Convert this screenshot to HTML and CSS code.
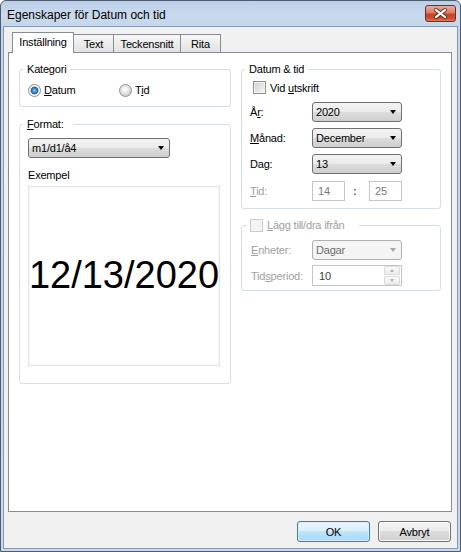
FILE: index.html
```html
<!DOCTYPE html>
<html lang="sv">
<head>
<meta charset="utf-8">
<title>Egenskaper för Datum och tid</title>
<link rel="stylesheet" href="styles.css">
</head>
<body>
<div class="window">
  <div class="titlebar">
    <span class="title">Egenskaper för Datum och tid</span>
    <div class="close">
      <svg width="31" height="17" viewBox="0 0 31 17">
        <path d="M11 5 L20 12 M20 5 L11 12" stroke="#5b2418" stroke-width="4.2" stroke-linecap="round" opacity="0.7" fill="none"/>
        <path d="M11 5 L20 12 M20 5 L11 12" stroke="#ffffff" stroke-width="2.2" stroke-linecap="round" fill="none"/>
      </svg>
    </div>
  </div>
  <div class="client">
    <div class="tabs">
      <div class="tab active w-inst">Inställning</div>
      <div class="tab w-text">Text</div>
      <div class="tab w-teck">Teckensnitt</div>
      <div class="tab w-rita">Rita</div>
    </div>
    <div class="panel">
      <div class="col col-left">
        <fieldset class="group g-kategori">
          <legend class="lg-kategori">Kategori</legend>
          <div class="radios">
            <div class="radio r-first"><span class="rbox checked"></span><span class="rtext"><u>D</u>atum</span></div>
            <div class="radio"><span class="rbox"></span><span class="rtext">T<u>i</u>d</span></div>
          </div>
        </fieldset>
        <fieldset class="group g-format">
          <legend class="lg-format"><u>F</u>ormat:</legend>
          <div class="fbody">
            <div class="combo c-format"><span>m1/d1/å4</span><span class="arrow"></span></div>
            <div class="caption">Exempel</div>
            <div class="example">12/13/2020</div>
          </div>
        </fieldset>
      </div>
      <div class="col col-right">
        <fieldset class="group g-datum">
          <legend class="lg-datum">Datum &amp; tid</legend>
          <div class="dbody">
            <div class="crow"><span class="cbox"></span><span class="ctext">Vid <u>u</u>tskrift</span></div>
            <div class="frow first">
              <span class="flabel">Å<u>r</u>:</span>
              <div class="combo c-field"><span>2020</span><span class="arrow"></span></div>
            </div>
            <div class="frow">
              <span class="flabel"><u>M</u>ånad:</span>
              <div class="combo c-field"><span>December</span><span class="arrow"></span></div>
            </div>
            <div class="frow">
              <span class="flabel">Da<u>g</u>:</span>
              <div class="combo c-field"><span>13</span><span class="arrow"></span></div>
            </div>
            <div class="frow tidrow">
              <span class="flabel disabled"><u>T</u>id:</span>
              <div class="edit small">14</div>
              <span class="colon">:</span>
              <div class="edit small">25</div>
            </div>
          </div>
        </fieldset>
        <fieldset class="group g-lagg">
          <legend class="lg-lagg"><span class="cbox dis"></span><span class="ltext"><u>L</u>ägg till/dra ifrån</span></legend>
          <div class="lbody">
            <div class="frow lrow">
              <span class="flabel l2 disabled"><u>E</u>nheter:</span>
              <div class="combo c-field dis"><span>Dagar</span><span class="arrow"></span></div>
            </div>
            <div class="frow lrow second">
              <span class="flabel l2 disabled">Tid<u>s</u>period:</span>
              <div class="edit spinedit"><span>10</span>
                <div class="spin">
                  <div class="sbtn"><span class="sup"></span></div>
                  <div class="sbtn"><span class="sdown"></span></div>
                </div>
              </div>
            </div>
          </div>
        </fieldset>
      </div>
    </div>
    <div class="buttons">
      <div class="btn default">OK</div>
      <div class="btn">Avbryt</div>
    </div>
  </div>
</div>
</body>
</html>
```

FILE: styles.css
```css
* { box-sizing: border-box; }
html, body { margin: 0; padding: 0; }
body {
  width: 461px;
  height: 552px;
  overflow: hidden;
  background: #ffffff;
  font-family: "Liberation Sans", Arial, sans-serif;
  font-size: 11px;
  color: #000;
}
u { text-decoration: underline; text-underline-offset: 1px; }

.window {
  width: 461px;
  height: 552px;
  border: 1px solid #4d5c70;
  border-radius: 6px 6px 0 0;
  background: linear-gradient(#bccfe8, #c9d9ee 14px, #c5d6eb 26px, #c9d9ec);
  padding: 0 2px 2px 2px;
  display: flex;
  flex-direction: column;
}

.titlebar {
  height: 25px;
  display: flex;
  align-items: flex-start;
  padding: 0 2px 0 4px;
  flex-shrink: 0;
}
.title {
  font-size: 12px;
  line-height: 14px;
  margin-top: 7px;
  color: #000;
}
.close {
  margin-left: auto;
  margin-top: 4px;
  width: 31px;
  height: 17px;
  border: 1px solid #6e2f24;
  border-radius: 3px;
  background: linear-gradient(#e9ad9d, #dc7a64 45%, #c9442a 55%, #c84a2f 80%, #d9805f);
  display: flex;
  overflow: hidden;
}
.close svg { display: block; margin: -1px; }

.client {
  flex: 1;
  border: 1px solid #8799b1;
  background: #f0f0f0;
  padding: 5px 5px 0 4px;
  display: flex;
  flex-direction: column;
}

/* tabs */
.tabs {
  height: 20px;
  display: flex;
  align-items: flex-end;
  padding-left: 4px;
}
.tab {
  height: 18px;
  border: 1px solid #898c95;
  border-bottom: none;
  background: linear-gradient(#f7f7f7, #ececec 50%, #e2e2e2);
  margin-left: -1px;
  text-align: center;
  line-height: 13px;
  padding-top: 3px;
  letter-spacing: -0.2px;
}
.tab.active {
  height: 21px;
  margin-bottom: -1px;
  margin-left: 0;
  background: #ffffff;
  position: relative;
  z-index: 1;
}
.w-inst { width: 62px; }
.w-text { width: 41px; }
.w-teck { width: 68px; }
.w-rita { width: 41px; }

.panel {
  height: 460px;
  border: 1px solid #898c95;
  background: #ffffff;
  display: flex;
  gap: 10px;
  padding: 10px 10px 0 10px;
}
.col { display: flex; flex-direction: column; }
.col-left { width: 212px; }
.col-right { width: 200px; }

/* group boxes */
.group {
  margin: 0;
  padding: 0;
  border: 1px solid #d5dfe5;
  border-radius: 3px;
  min-width: 0;
}
.group legend {
  padding: 0 4px;
  margin-left: 3px;
  line-height: 13px;
  letter-spacing: -0.2px;
}
.lg-format { padding-right: 9px !important; }
.g-kategori { height: 44px; }
.g-format { height: 266px; margin-top: 11px; }
.g-datum { height: 146px; }
.g-lagg { height: 72px; margin-top: 10px; }

/* radios */
.radios {
  display: flex;
  padding: 6px 0 0 8px;
}
.radio {
  display: flex;
  align-items: center;
  height: 16px;
  letter-spacing: -0.2px;
}
.r-first { width: 91px; }
.rbox {
  width: 13px;
  height: 13px;
  border-radius: 50%;
  border: 1px solid #8e9398;
  background: radial-gradient(circle at 45% 40%, #ffffff 0, #ececec 3px, #cfcfcf 6px);
  flex-shrink: 0;
}
.rbox.checked {
  background: radial-gradient(circle at 50% 50%, #8fd2fb 0, #3d8ed2 2px, #1b5b9a 3.4px, #e9e9e9 4.2px, #f8f8f8 5.2px, #d8d8d8 6px);
}
.rtext { margin-left: 3px; }

/* format body */
.fbody { padding: 7px 0 0 8px; }
.combo {
  display: flex;
  align-items: center;
  height: 20px;
  padding-left: 3px;
  border: 1px solid #707070;
  border-radius: 3px;
  background: linear-gradient(#f3f3f3, #ebebeb 50%, #dddddd 50%, #cfcfcf);
  letter-spacing: -0.2px;
}
.c-format { width: 142px; }
.c-field { width: 90px; }
.arrow {
  margin-left: auto;
  margin-right: 5px;
  width: 0;
  height: 0;
  border-left: 3.5px solid transparent;
  border-right: 3.5px solid transparent;
  border-top: 4px solid #000;
}
.combo.dis {
  border-color: #adb2b5;
  background: #f4f4f4;
  color: #6d6d6d;
}
.combo.dis .arrow { border-top-color: #a7a7a7; }

.caption {
  margin-top: 11px;
  line-height: 13px;
  letter-spacing: -0.2px;
}
.example {
  margin-top: 4px;
  width: 192px;
  height: 180px;
  border: 1px solid #e4e4e4;
  box-shadow: inset 0 0 0 1px #f7f7f7;
  display: flex;
  align-items: center;
  justify-content: center;
  font-family: "Liberation Sans", Arial, sans-serif;
  font-size: 38px;
  padding-bottom: 1px;
}

/* datum & tid */
.dbody { padding: 5px 0 0 8px; }
.crow {
  display: flex;
  align-items: center;
  height: 13px;
  padding-left: 3px;
  letter-spacing: -0.2px;
}
.cbox {
  width: 13px;
  height: 13px;
  border: 1px solid #8e8f8f;
  background: linear-gradient(135deg, #c9c9c9, #e8e8e8 60%, #f6f6f6);
  box-shadow: inset 0 0 0 1px #f3f3f3;
  flex-shrink: 0;
  display: inline-block;
}
.cbox.dis {
  border-color: #c9cbcc;
  background: #f4f4f4;
  box-shadow: none;
  vertical-align: top;
}
.ctext { margin-left: 4px; }

.frow {
  display: flex;
  align-items: center;
  height: 20px;
  margin-top: 6px;
  letter-spacing: -0.2px;
}
.frow.first { margin-top: 8px; }
.frow.tidrow { margin-top: 7px; }
.flabel { width: 62px; flex-shrink: 0; }
.flabel.l2 { width: 61px; }
.disabled { color: #a0a0a0; }

.edit {
  height: 20px;
  border: 1px solid #c3c6c9;
  background: #ffffff;
  color: #7a7a7a;
  display: flex;
  align-items: center;
  padding-left: 5px;
}
.edit.small { width: 33px; }
.colon {
  width: 24px;
  padding-left: 8px;
  font-weight: bold;
  color: #555;
}

/* lägg till */
.lg-lagg {
  margin-left: 5px !important;
  padding: 0 14px 0 3px !important;
  color: #a0a0a0;
}
.ltext { margin-left: 4px; }
.lbody { padding: 8px 0 0 9px; }
.lrow { margin-top: 0; }
.lrow.second { margin-top: 5px; height: 21px; }
.spinedit {
  width: 90px;
  height: 21px;
  color: #404040;
  padding-left: 6px;
  padding-right: 1px;
}
.spin {
  margin-left: auto;
  display: flex;
  flex-direction: column;
  gap: 1px;
}
.sbtn {
  width: 16px;
  height: 9px;
  border: 1px solid #dadada;
  border-radius: 2px;
  background: linear-gradient(#fafafa, #ececec);
  display: flex;
  align-items: center;
  justify-content: center;
}
.sup {
  width: 0; height: 0;
  border-left: 2.5px solid transparent;
  border-right: 2.5px solid transparent;
  border-bottom: 3px solid #b0b0b0;
}
.sdown {
  width: 0; height: 0;
  border-left: 2.5px solid transparent;
  border-right: 2.5px solid transparent;
  border-top: 3px solid #b0b0b0;
}

/* buttons */
.buttons {
  display: flex;
  justify-content: flex-end;
  gap: 8px;
  margin-top: 9px;
  padding-right: 1px;
}
.btn {
  width: 73px;
  height: 21px;
  border: 1px solid #707070;
  border-radius: 3px;
  background: linear-gradient(#f3f3f3, #ebebeb 50%, #dddddd 50%, #cfcfcf);
  box-shadow: inset 0 0 0 1px #fbfbfb;
  display: flex;
  align-items: center;
  justify-content: center;
  letter-spacing: -0.2px;
}
.btn.default {
  border-color: #3c7fb1;
  background: linear-gradient(#eaf6fd, #d9f0fc 50%, #bee6fd 50%, #a7d9f5);
  box-shadow: inset 0 0 0 1px #d6eefa;
}
```
